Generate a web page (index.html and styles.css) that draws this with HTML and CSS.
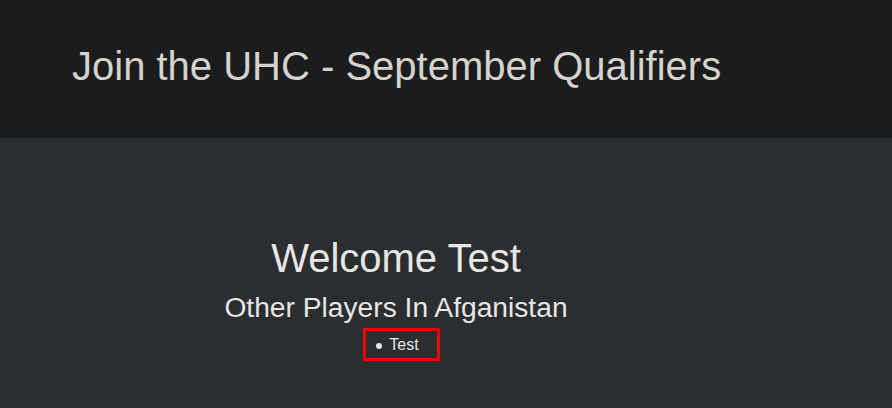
FILE: index.html
```html
<!DOCTYPE html>
<html lang="en">
<head>
<meta charset="utf-8">
<title>UHC Qualifiers</title>
<link rel="stylesheet" href="styles.css">
</head>
<body>
<header class="site-header">
  <h1 class="site-title">Join the UHC - September Qualifiers</h1>
</header>
<main class="content">
  <h2 class="welcome">Welcome Test</h2>
  <h3 class="subtitle">Other Players In Afganistan</h3>
  <ul class="players">
    <li class="player">Test</li>
  </ul>
</main>
</body>
</html>
```

FILE: styles.css
```css
html, body {
  margin: 0;
  padding: 0;
  height: 100%;
}
body {
  background: #2b2e31;
  font-family: "Liberation Sans", Arial, sans-serif;
  color: #e8e6e3;
}
.site-header {
  background: #1b1c1e;
  height: 138px;
  box-sizing: border-box;
  padding: 43px 0 0 72px;
}
.site-title {
  margin: 0;
  font-size: 40px;
  line-height: 46px;
  font-weight: normal;
  color: #d6d2cc;
}
.content {
  display: flex;
  flex-direction: column;
  align-items: center;
  padding: 97px 100px 0 0;
}
.welcome {
  margin: 0;
  font-size: 40px;
  line-height: 46px;
  font-weight: normal;
}
.subtitle {
  margin: 10px 0 0;
  font-size: 28.2px;
  line-height: 32px;
  font-weight: normal;
}
.players {
  list-style: none;
  margin: 5px 0 0 11px;
  padding: 4px 18px 4px 10px;
  border: 3px solid #f00000;
  font-size: 16px;
  line-height: 19px;
}
.player::before {
  content: "";
  display: inline-block;
  width: 6px;
  height: 6px;
  border-radius: 50%;
  background: #e8e6e3;
  margin-right: 7px;
  vertical-align: middle;
}
```
